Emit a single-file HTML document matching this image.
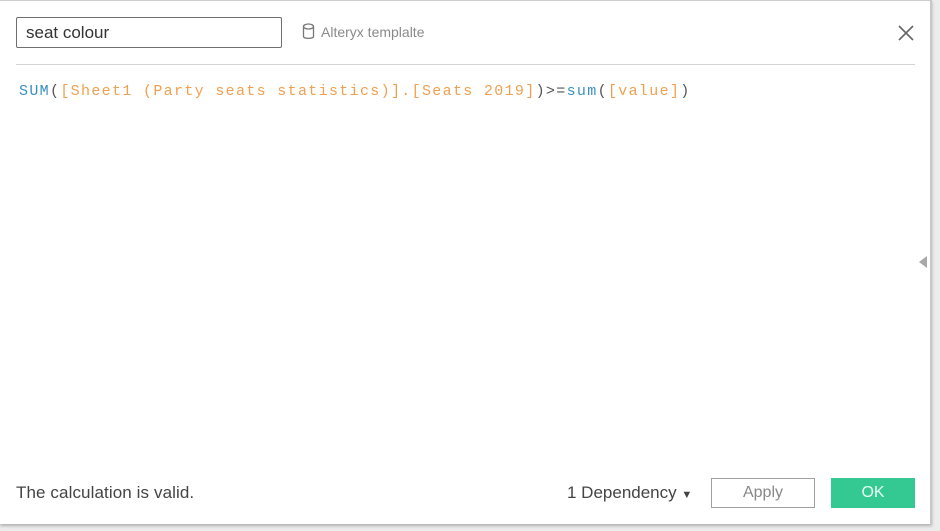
<!DOCTYPE html>
<html><head><style>
body{margin:0;width:940px;height:531px;background:#ececec;position:relative;overflow:hidden;font-family:"Liberation Sans",sans-serif;}
.dlg{position:absolute;left:0;top:0;width:930px;height:524px;background:#fff;border-right:2px solid #c8c8c8;box-shadow:0 2px 3px rgba(0,0,0,.25);}
.topline{position:absolute;left:0;top:0;width:930px;height:1px;background:#cfcfcf;}
.name{position:absolute;left:16px;top:17px;border:1px solid #707070;border-radius:2px;font-size:17px;color:#333;line-height:29px;padding-left:9px;box-sizing:border-box;width:266px;height:31px;}
.ds{position:absolute;left:302px;top:23px;font-size:14px;color:#8a8a8a;}
.sep{position:absolute;left:16px;top:64px;width:899px;height:1px;background:#d4d4d4;}
.x{position:absolute;left:897px;top:24px;}
.code{position:absolute;left:19px;top:83px;font-family:"Liberation Mono",monospace;font-size:15px;letter-spacing:1.33px;color:#f0a050;white-space:pre;}
.b{color:#3a8fbf}
.d{color:#555}
.valid{position:absolute;left:16px;top:483px;font-size:17px;color:#444;letter-spacing:0.1px;}
.dep{position:absolute;left:567px;top:483px;font-size:17px;color:#444;}
.apply{position:absolute;left:711px;top:478px;width:104px;height:30px;border:1px solid #a0a0a0;box-sizing:border-box;text-align:center;line-height:28px;font-size:16px;color:#888;}
.ok{position:absolute;left:831px;top:478px;width:84px;height:30px;background:#34c992;text-align:center;line-height:30px;font-size:16px;color:#e8fff4;}
.tri{position:absolute;left:919px;top:256px;width:0;height:0;border-top:6px solid transparent;border-bottom:6px solid transparent;border-right:8px solid #a8a8a8;}
</style></head><body>
<div class="dlg">
<div class="topline"></div>
<div class="name">seat colour</div>
<div class="ds"><svg width="13" height="17" viewBox="0 0 13 17" style="vertical-align:-3px;margin-right:6px"><ellipse cx="6.5" cy="3.5" rx="5" ry="2.5" fill="none" stroke="#777" stroke-width="1.3"/><path d="M1.5 3.5V13.5C1.5 16 11.5 16 11.5 13.5V3.5" fill="none" stroke="#777" stroke-width="1.3"/></svg>Alteryx templalte</div>
<svg class="x" width="18" height="18" viewBox="0 0 18 18"><path d="M2 2L16 16M16 2L2 16" stroke="#666" stroke-width="1.6"/></svg>
<div class="sep"></div>
<div class="code"><span class="b">SUM</span><span class="d">(</span>[Sheet1 (Party seats statistics)].[Seats 2019]<span class="d">)&gt;=</span><span class="b">sum</span><span class="d">(</span>[value]<span class="d">)</span></div>
<div class="valid">The calculation is valid.</div>
<div class="dep">1 Dependency <span style="font-size:11px">▼</span></div>
<div class="apply">Apply</div>
<div class="ok">OK</div>
</div>
<div class="tri"></div>
</body></html>
